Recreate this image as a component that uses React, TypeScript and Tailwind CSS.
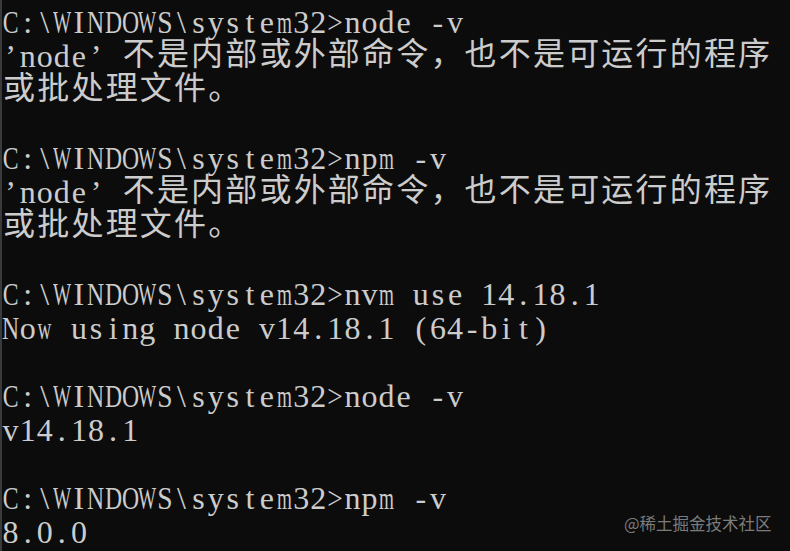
import React from "react";

const LINES: string[] = [
  "C:\\WINDOWS\\system32>node -v",
  "’node’ 不是内部或外部命令，也不是可运行的程序",
  "或批处理文件。",
  "",
  "C:\\WINDOWS\\system32>npm -v",
  "’node’ 不是内部或外部命令，也不是可运行的程序",
  "或批处理文件。",
  "",
  "C:\\WINDOWS\\system32>nvm use 14.18.1",
  "Now using node v14.18.1 (64-bit)",
  "",
  "C:\\WINDOWS\\system32>node -v",
  "v14.18.1",
  "",
  "C:\\WINDOWS\\system32>npm -v",
  "8.0.0",
];

const isWide = (ch: string) => /[\u3000-\u9fff\uff00-\uffef]/.test(ch);

function scaleClass(ch: string): string {
  if ("WMmw".includes(ch)) return "scale-x-[0.6]";
  if ("CNDOGHKUVXYAw".includes(ch)) return "scale-x-[0.74]";
  if ("S>".includes(ch)) return "scale-x-[0.86]";
  return "";
}

function Line({ text }: { text: string }) {
  const chars = Array.from(text);
  return (
    <div className="h-[34px] flex items-start whitespace-pre">
      {chars.map((ch, i) =>
        isWide(ch) ? (
          <span
            key={i}
            className="block shrink-0 w-[34.2px] h-[34px] text-[32px] leading-[25px] font-['Noto_Sans_CJK_SC','Noto_Sans_CJK_JP',sans-serif] text-center"
          >
            {ch}
          </span>
        ) : (
          <span
            key={i}
            className="flex justify-center shrink-0 w-[17.1px] h-[34px] text-[32px] leading-[34px] font-['Liberation_Serif',serif]"
          >
            <span className={"inline-block origin-center " + scaleClass(ch)}>{ch}</span>
          </span>
        )
      )}
    </div>
  );
}

export default function App() {
  return (
    <div className="relative w-[790px] h-[551px] overflow-hidden bg-[#0c0c0c] text-[#cccccc] border-l-2 border-[#3a3a3a] pt-[5px]">
      {LINES.map((l, i) => (
        <Line key={i} text={l} />
      ))}
      <div className="absolute left-[622px] top-[510px] text-[16.5px] leading-[26px] text-[#7b7b7b] font-['Noto_Sans_CJK_SC',sans-serif]">
        @稀土掘金技术社区
      </div>
    </div>
  );
}
